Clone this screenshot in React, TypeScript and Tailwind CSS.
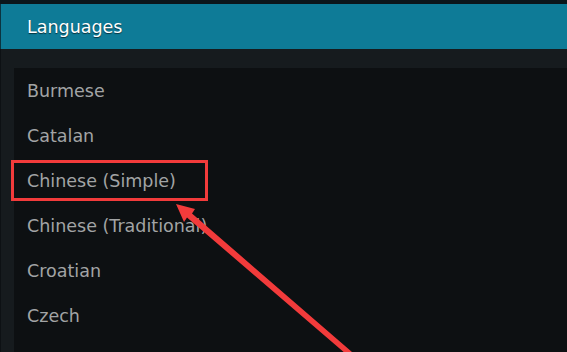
import React from "react";

const items = ["Burmese", "Catalan", "Chinese (Simple)", "Chinese (Traditional)", "Croatian", "Czech"];

export default function App() {
  return (
    <div
      className="relative w-[567px] h-[352px] overflow-hidden bg-[#161b1e]"
      style={{ fontFamily: '"DejaVu Sans", sans-serif' }}
    >
      <div className="h-[4px] bg-[#0b161b]" />
      <div className="h-[45px] bg-[#0e7b97] border-l border-[#0b3440] flex items-center pl-[26px] pt-[2px]">
        <span className="text-[17.5px] text-white [text-shadow:0_1px_1px_rgba(0,0,0,0.6)]">Languages</span>
      </div>
      <div className="flex h-[303px] border-l border-[#0d1114]">
        <div className="w-[13px] shrink-0" />
        <div className="flex-1 mt-[19px] bg-[#0d1012] flex flex-col">
          {items.map((t) => (
            <div key={t} className="h-[45px] shrink-0 flex items-center pl-[13px] pt-[2px] text-[17.5px] text-[#a2a4a5]">
              {t}
            </div>
          ))}
        </div>
      </div>
      <div className="absolute left-[11px] top-[160px] w-[197px] h-[41px] border-[3px] border-[#f23b3b]" />
      <svg className="absolute left-0 top-0" width="567" height="352" viewBox="0 0 567 352">
        <polygon
          points="176,204 195,209 192,213.5 352,352 346,354 187,217.5 184,222"
          fill="#f23b3b"
        />
      </svg>
    </div>
  );
}
